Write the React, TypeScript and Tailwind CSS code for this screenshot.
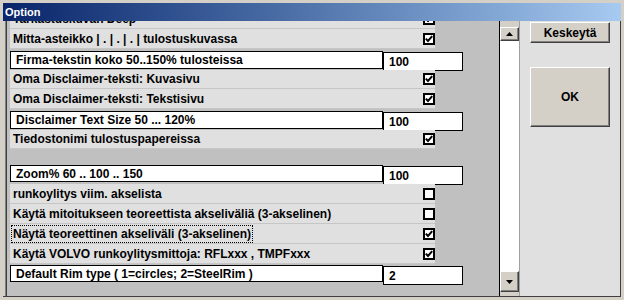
import React from "react";

const Check = ({ checked }: { checked: boolean }) => (
  <div className="w-[12px] h-[12px] border-2 border-black bg-white flex-none flex items-center justify-center">
    {checked && (
      <svg width="8" height="8" viewBox="0 0 8 8">
        <polyline points="0.8,3.6 3,6 7.2,1.2" fill="none" stroke="black" strokeWidth="2" />
      </svg>
    )}
  </div>
);

const CheckRow = ({ text, checked, h, focus }: { text: string; checked: boolean; h: string; focus?: boolean }) => (
  <div className={`${h} w-[425px] flex-none bg-[#e0e0e0] border-b border-[#c6c6c6] flex items-center ${focus ? "pl-[1px]" : "pl-[3px]"}`}>
    {focus ? (
      <span className="h-[18px] border border-dotted border-black px-[1px] flex items-center whitespace-nowrap">{text}</span>
    ) : (
      <span className="whitespace-nowrap">{text}</span>
    )}
    <div className="ml-auto">
      <Check checked={checked} />
    </div>
  </div>
);

const InputRow = ({ label, value, h, pt, bh }: { label: string; value: string; h: string; pt: string; bh: string }) => (
  <div className={`${h} ${pt} flex-none flex items-start`}>
    <div className={`w-[373px] ${bh} bg-white border border-black flex items-center pl-[5px] whitespace-nowrap`}>{label}</div>
    <div className="w-[80px] h-[19px] mt-[1px] bg-white border border-black flex items-center pl-[5px]">{value}</div>
  </div>
);

const Tri = ({ down }: { down?: boolean }) => (
  <svg width="7" height="4" viewBox="0 0 7 4">
    {down ? <polygon points="0,0 7,0 3.5,4" fill="black" /> : <polygon points="0,4 7,4 3.5,0" fill="black" />}
  </svg>
);

export default function App() {
  return (
    <div
      className="w-[624px] h-[300px] bg-[#d4d0c8] flex flex-col overflow-hidden px-[3px] pt-[3px] text-[12px] font-bold text-black"
      style={{ fontFamily: '"Liberation Sans", Arial, sans-serif' }}
    >
      <div className="h-[18px] flex-none bg-gradient-to-r from-[#0a246a] to-[#a6caf0] flex items-center pl-[2px] text-white text-[11px] font-bold">
        Option
      </div>
      <div className="flex-1 flex border-b border-[#404040] border-r mb-[3px] min-h-0">
        <div className="w-[496px] h-full flex-none border-l-2 border-[#d4d0c8]">
          <div className="h-full border-l border-[#808080]">
            <div className="h-full border-l border-[#404040] bg-[#c0c0c0] overflow-hidden pl-[3px]">
              <div className="-mt-[12px] flex flex-col">
                <CheckRow h="h-[20px]" text="Tarkastuskuvan Deep" checked={true} />
                <CheckRow h="h-[20px]" text="Mitta-asteikko | . | . | . | tulostuskuvassa" checked={true} />
                <InputRow h="h-[21px]" pt="pt-[2px]" bh="h-[18px]" label="Firma-tekstin koko 50..150% tulosteissa" value="100" />
                <CheckRow h="h-[19px]" text="Oma Disclaimer-teksti: Kuvasivu" checked={true} />
                <CheckRow h="h-[20px]" text="Oma Disclaimer-teksti: Tekstisivu" checked={true} />
                <InputRow h="h-[21px]" pt="pt-[2px]" bh="h-[18px]" label="Disclaimer Text Size 50 ... 120%" value="100" />
                <CheckRow h="h-[19px]" text="Tiedostonimi tulostuspapereissa" checked={true} />
                <div className="h-[15px] flex-none" />
                <InputRow h="h-[20px]" pt="pt-[1px]" bh="h-[17px]" label="Zoom% 60 .. 100 .. 150" value="100" />
                <CheckRow h="h-[20px]" text="runkoylitys viim. akselista" checked={false} />
                <CheckRow h="h-[20px]" text="Käytä mitoitukseen teoreettista akseliväliä (3-akselinen)" checked={false} />
                <CheckRow h="h-[20px]" text="Näytä teoreettinen akseliväli (3-akselinen)" checked={true} focus />
                <CheckRow h="h-[20px]" text="Käytä VOLVO runkoylitysmittoja: RFLxxx , TMPFxxx" checked={true} />
                <InputRow h="h-[20px]" pt="pt-[1px]" bh="h-[17px]" label="Default Rim type ( 1=circles; 2=SteelRim )" value="2" />
              </div>
            </div>
          </div>
        </div>
        <div className="w-[20px] h-full flex-none border-l border-black flex flex-col bg-[#d4d0c8]">
          <div className="h-[6px] flex-none" />
          <div className="h-[14px] flex-none border-t border-l border-white border-r border-b border-r-[#404040] border-b-[#404040] shadow-[inset_-1px_-1px_0_#808080] flex items-center justify-center">
            <Tri />
          </div>
          <div className="flex-1 bg-white" />
          <div className="h-[21px] flex-none border-t border-l border-white border-r border-b border-r-[#404040] border-b-[#404040] shadow-[inset_-1px_-1px_0_#808080] flex items-center justify-center">
            <Tri down />
          </div>
          <div className="h-[4px] flex-none" />
        </div>
        <div className="flex-1 h-full border-l border-[#a0a0a0] bg-[#e0e0e0] pl-[10px] pt-[1px] flex flex-col">
          <div className="w-[80px] h-[21px] flex-none bg-[#d4d0c8] border border-white border-r-[#404040] border-b-[#404040] shadow-[inset_-1px_-1px_0_#808080] flex items-center justify-center">
            Keskeytä
          </div>
          <div className="w-[80px] h-[60px] mt-[24px] flex-none bg-[#d4d0c8] border border-white border-r-[#404040] border-b-[#404040] shadow-[inset_-1px_-1px_0_#808080] flex items-center justify-center">
            OK
          </div>
        </div>
      </div>
    </div>
  );
}
